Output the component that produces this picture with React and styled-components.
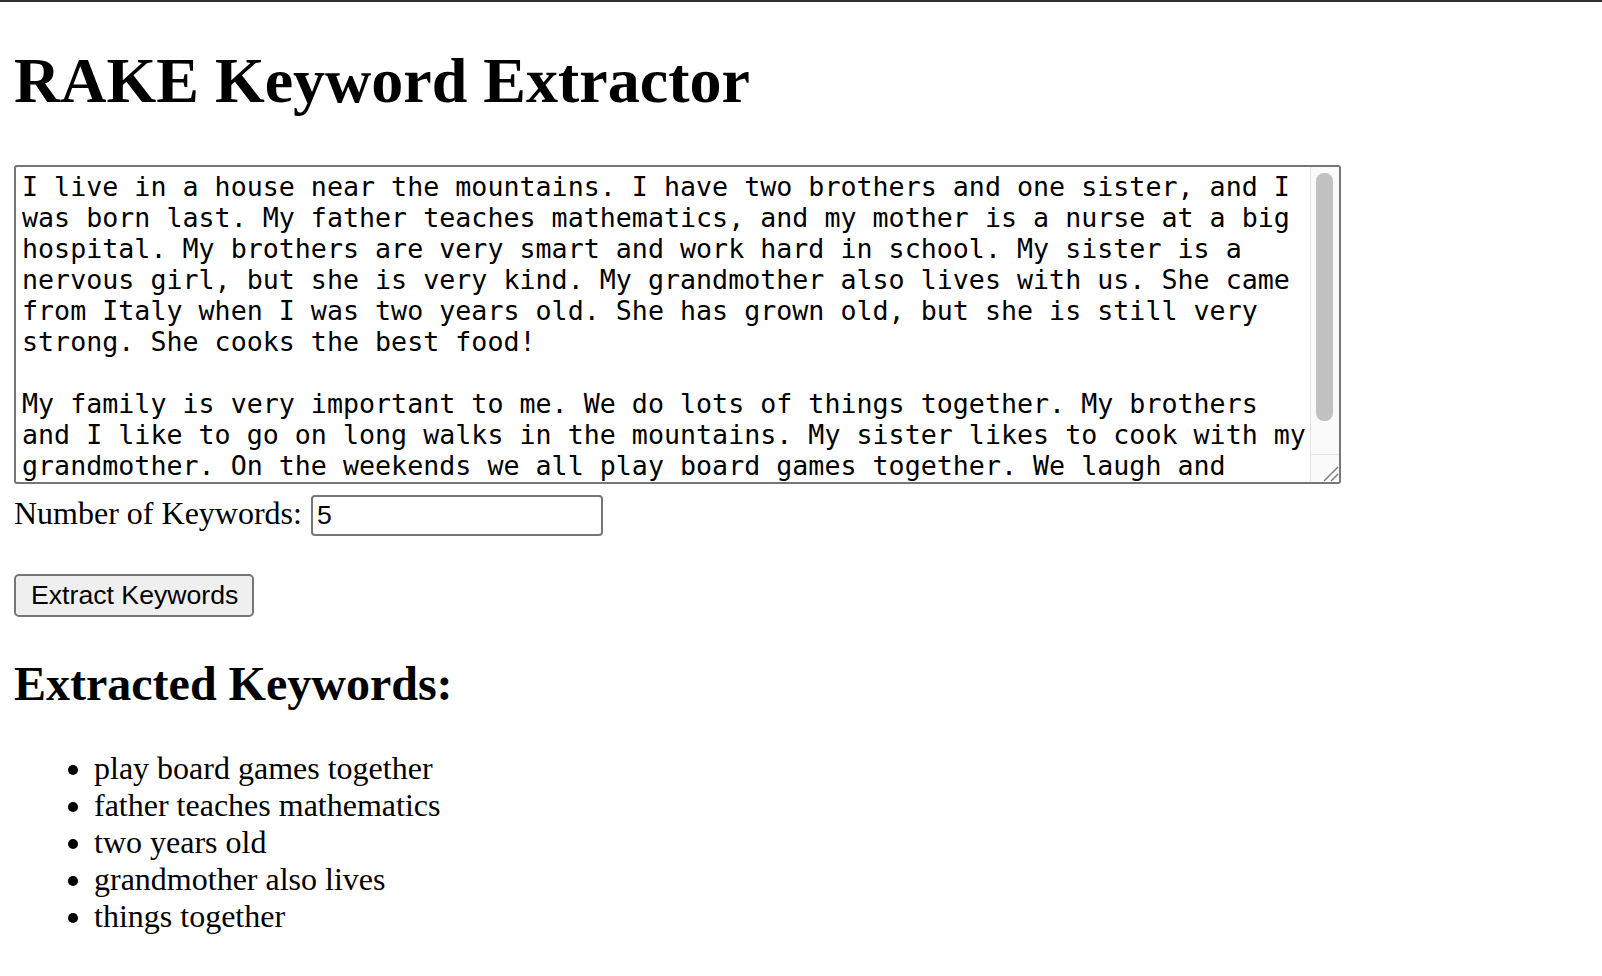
import React from "react";
import styled, { createGlobalStyle } from "styled-components";

const GlobalStyle = createGlobalStyle`
  html, body {
    margin: 0;
    padding: 0;
    background: #ffffff;
  }
  body {
    font-family: "Liberation Serif", "Times New Roman", serif;
    color: #000000;
  }
`;

const TopEdge = styled.div`
  height: 2px;
  background: #2f2f2f;
`;

const Page = styled.main`
  display: flex;
  flex-direction: column;
  align-items: flex-start;
  padding: 0 14px 40px;
`;

const Title = styled.h1`
  margin: 42px 0 47px;
  font-size: 64px;
  line-height: 74px;
  font-weight: 700;
`;

const TextFrame = styled.div`
  box-sizing: border-box;
  display: flex;
  width: 1327px;
  height: 319px;
  margin: 0 0 11px;
  border: 2px solid #767676;
  border-radius: 3px;
  background: #ffffff;
  overflow: hidden;
`;

const TextBox = styled.textarea`
  box-sizing: border-box;
  flex: 1;
  min-width: 0;
  height: 100%;
  margin: 0;
  padding: 4px 2px 4px 6px;
  border: none;
  background: transparent;
  color: #000000;
  font-family: "DejaVu Sans Mono", "Liberation Mono", monospace;
  font-size: 26.6667px;
  line-height: normal;
  resize: none;
  outline: none;
  overflow: hidden;
`;

const ScrollColumn = styled.div`
  display: flex;
  flex-direction: column;
  width: 28px;
  flex: none;
  border-left: 1px solid #e6e6e6;
  background: #fafafa;
`;

const ScrollTrack = styled.div`
  flex: 1;
  padding: 6px 6px 0 5px;
`;

const ScrollThumb = styled.div`
  height: 248px;
  border-radius: 8px;
  background: #c1c1c1;
`;

const ResizeCorner = styled.div`
  height: 27px;
  border-top: 1px solid #e6e6e6;
  display: flex;
  align-items: flex-end;
  justify-content: flex-end;
`;

const FieldRow = styled.div`
  display: flex;
  align-items: baseline;
`;

const FieldLabel = styled.label`
  font-size: 32px;
  line-height: 37px;
`;

const NumberInput = styled.input`
  box-sizing: border-box;
  width: 292px;
  height: 41px;
  margin: 0 0 0 9px;
  padding: 0 4px;
  border: 2px solid #767676;
  border-radius: 4px;
  background: #ffffff;
  color: #000000;
  font-family: "Liberation Sans", Arial, sans-serif;
  font-size: 26.6667px;
  outline: none;
  -moz-appearance: textfield;

  &::-webkit-outer-spin-button,
  &::-webkit-inner-spin-button {
    -webkit-appearance: none;
    margin: 0;
  }
`;

const ActionButton = styled.button`
  box-sizing: border-box;
  height: 43px;
  margin: 38px 0 0;
  padding: 0 14px 0 15px;
  border: 2px solid #767676;
  border-radius: 5px;
  background: #efefef;
  color: #000000;
  font-family: "Liberation Sans", Arial, sans-serif;
  font-size: 26.6667px;
  line-height: normal;
  cursor: pointer;
`;

const SectionTitle = styled.h2`
  margin: 39px 0 0;
  font-size: 48px;
  line-height: 55px;
  font-weight: 700;
`;

const KeywordList = styled.ul`
  margin: 39px 0 0;
  padding: 0 0 0 80px;
  list-style: disc outside;
`;

const KeywordItem = styled.li`
  font-size: 32px;
  line-height: 37px;
`;

const SAMPLE_TEXT =
  "I live in a house near the mountains. I have two brothers and one sister, and I was born last. My father teaches mathematics, and my mother is a nurse at a big hospital. My brothers are very smart and work hard in school. My sister is a nervous girl, but she is very kind. My grandmother also lives with us. She came from Italy when I was two years old. She has grown old, but she is still very strong. She cooks the best food!\n\nMy family is very important to me. We do lots of things together. My brothers and I like to go on long walks in the mountains. My sister likes to cook with my grandmother. On the weekends we all play board games together. We laugh and always have fun together. I love my family very much!";

const KEYWORDS = [
  "play board games together",
  "father teaches mathematics",
  "two years old",
  "grandmother also lives",
  "things together",
];

function ResizeGrip() {
  return (
    <svg width="16" height="16" viewBox="0 0 16 16" aria-hidden="true">
      <line x1="1" y1="15" x2="15" y2="1" stroke="#7a7a7a" strokeWidth="1.4" />
      <line x1="8" y1="15" x2="15" y2="8" stroke="#7a7a7a" strokeWidth="1.4" />
    </svg>
  );
}

export default function App() {
  return (
    <>
      <GlobalStyle />
      <TopEdge />
      <Page>
        <Title>RAKE Keyword Extractor</Title>
        <TextFrame>
          <TextBox defaultValue={SAMPLE_TEXT} spellCheck={false} />
          <ScrollColumn>
            <ScrollTrack>
              <ScrollThumb />
            </ScrollTrack>
            <ResizeCorner>
              <ResizeGrip />
            </ResizeCorner>
          </ScrollColumn>
        </TextFrame>
        <FieldRow>
          <FieldLabel htmlFor="num-keywords">Number of Keywords:</FieldLabel>
          <NumberInput id="num-keywords" type="number" defaultValue={5} />
        </FieldRow>
        <ActionButton type="button">Extract Keywords</ActionButton>
        <SectionTitle>Extracted Keywords:</SectionTitle>
        <KeywordList>
          {KEYWORDS.map((k) => (
            <KeywordItem key={k}>{k}</KeywordItem>
          ))}
        </KeywordList>
      </Page>
    </>
  );
}
